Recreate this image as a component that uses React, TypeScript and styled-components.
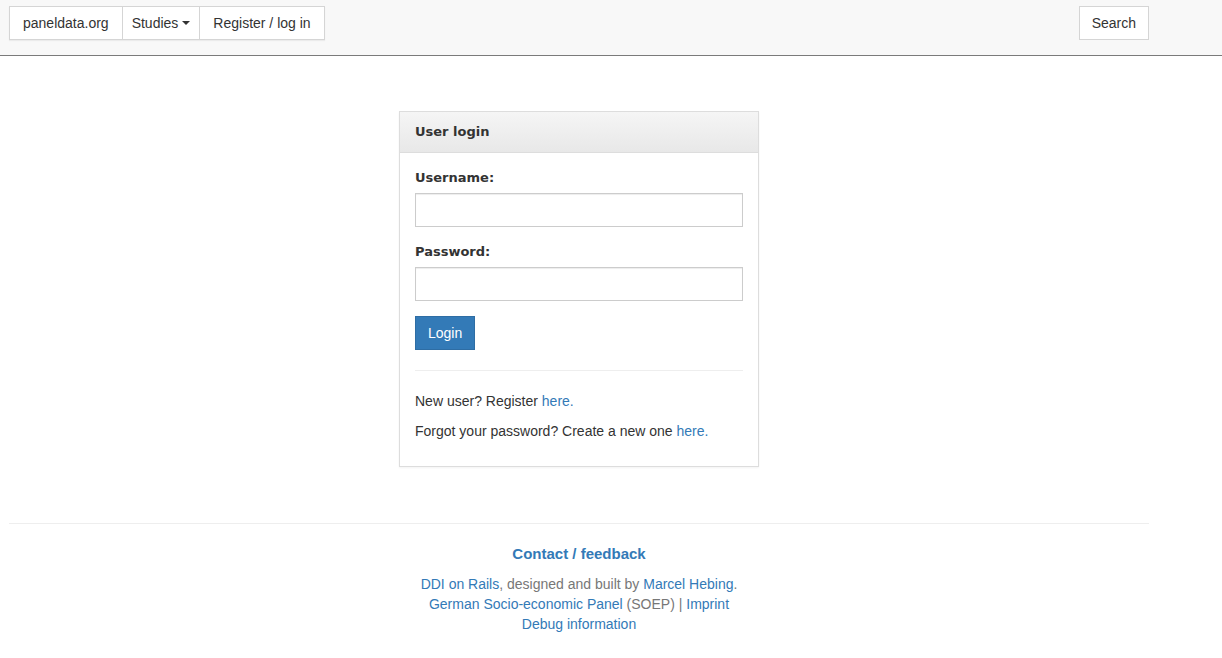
import React from "react";
import styled, { createGlobalStyle } from "styled-components";

const GlobalStyle = createGlobalStyle`
  html, body {
    margin: 0;
    padding: 0;
    background: #fff;
  }
  body {
    font-family: "Liberation Sans", Arial, sans-serif;
    font-size: 14px;
    line-height: 20px;
    color: #333;
  }
  * {
    box-sizing: border-box;
  }
`;

const Navbar = styled.nav`
  height: 56px;
  background: #f8f8f8;
  border-bottom: 1px solid #7a7a7a;
`;

const NavInner = styled.div`
  width: 1140px;
  margin-left: 9px;
  padding-top: 6px;
  display: flex;
  justify-content: space-between;
  align-items: flex-start;
`;

const NavGroup = styled.div`
  display: flex;
  background: #fff;
  border: 1px solid #d5d5d5;
  box-shadow: 0 1px 1px rgba(0, 0, 0, 0.05);
`;

const NavItem = styled.a<{ $divider?: boolean; $pad?: number }>`
  display: flex;
  align-items: center;
  height: 32px;
  padding: 0 ${(p) => p.$pad ?? 13}px;
  color: #333;
  text-decoration: none;
  white-space: nowrap;
  border-left: ${(p) => (p.$divider ? "1px solid #d5d5d5" : "none")};
`;

const Caret = styled.span`
  display: inline-block;
  width: 0;
  height: 0;
  margin-left: 4px;
  border-top: 4px solid #333;
  border-left: 4px solid transparent;
  border-right: 4px solid transparent;
`;

const Main = styled.main`
  width: 1140px;
  margin-left: 9px;
  padding-top: 55px;
  display: flex;
  flex-direction: column;
  align-items: center;
`;

const Panel = styled.section`
  width: 360px;
  border: 1px solid #ddd;
  background: #fff;
  box-shadow: 0 1px 2px rgba(0, 0, 0, 0.05);
`;

const PanelHeading = styled.div`
  height: 41px;
  padding: 10px 15px;
  background: linear-gradient(to bottom, #f5f5f5 0%, #e8e8e8 100%);
  border-bottom: 1px solid #ddd;
  font-family: "DejaVu Sans", Verdana, sans-serif;
  font-weight: bold;
  font-size: 13px;
  color: #333;
`;

const PanelBody = styled.div`
  padding: 15px;
`;

const FormGroup = styled.div`
  margin-bottom: 15px;
`;

const Label = styled.label`
  display: block;
  margin-bottom: 5px;
  font-family: "DejaVu Sans", Verdana, sans-serif;
  font-weight: bold;
  font-size: 13px;
  color: #333;
`;

const Input = styled.input`
  display: block;
  width: 100%;
  height: 34px;
  padding: 6px 12px;
  border: 1px solid #ccc;
  border-radius: 0;
  font: inherit;
  box-shadow: inset 0 1px 1px rgba(0, 0, 0, 0.075);
  outline: none;
`;

const Button = styled.button`
  display: block;
  height: 34px;
  padding: 6px 12px;
  background: #337ab7;
  border: 1px solid #2e6da4;
  border-radius: 0;
  color: #fff;
  font-family: "Liberation Sans", Arial, sans-serif;
  font-size: 14px;
  line-height: 20px;
`;

const Rule = styled.hr`
  margin: 20px 0;
  border: 0;
  border-top: 1px solid #eee;
`;

const Para = styled.p`
  margin: 0 0 10px;
`;

const Link = styled.a<{ $bold?: boolean }>`
  color: #337ab7;
  text-decoration: none;
  font-weight: ${(p) => (p.$bold ? "bold" : "normal")};
  font-size: ${(p) => (p.$bold ? "15px" : "inherit")};
`;

const SearchButton = styled.a`
  display: flex;
  align-items: center;
  height: 34px;
  padding: 0 12px;
  background: #fff;
  border: 1px solid #d5d5d5;
  color: #333;
  text-decoration: none;
`;

const Footer = styled.footer`
  width: 1140px;
  margin-left: 9px;
  margin-top: 56px;
  border-top: 1px solid #eee;
  padding-top: 20px;
  text-align: center;
  color: #777;
`;

const FooterTitle = styled.p`
  margin: 0 0 10px;
`;

const FooterLine = styled.div``;

export default function App() {
  return (
    <>
      <GlobalStyle />
      <Navbar>
        <NavInner>
          <NavGroup>
            <NavItem href="#">paneldata.org</NavItem>
            <NavItem href="#" $divider $pad={9}>
              Studies <Caret />
            </NavItem>
            <NavItem href="#" $divider>
              Register / log in
            </NavItem>
          </NavGroup>
          <SearchButton href="#">Search</SearchButton>
        </NavInner>
      </Navbar>
      <Main>
        <Panel>
          <PanelHeading>User login</PanelHeading>
          <PanelBody>
            <FormGroup>
              <Label>Username:</Label>
              <Input type="text" />
            </FormGroup>
            <FormGroup>
              <Label>Password:</Label>
              <Input type="password" />
            </FormGroup>
            <Button>Login</Button>
            <Rule />
            <Para>
              New user? Register <Link href="#">here.</Link>
            </Para>
            <Para>
              Forgot your password? Create a new one <Link href="#">here.</Link>
            </Para>
          </PanelBody>
        </Panel>
      </Main>
      <Footer>
        <FooterTitle>
          <Link href="#" $bold>
            Contact / feedback
          </Link>
        </FooterTitle>
        <FooterLine>
          <Link href="#">DDI on Rails</Link>, designed and built by{" "}
          <Link href="#">Marcel Hebing</Link>.
        </FooterLine>
        <FooterLine>
          <Link href="#">German Socio-economic Panel</Link> (SOEP) |{" "}
          <Link href="#">Imprint</Link>
        </FooterLine>
        <FooterLine>
          <Link href="#">Debug information</Link>
        </FooterLine>
      </Footer>
    </>
  );
}
